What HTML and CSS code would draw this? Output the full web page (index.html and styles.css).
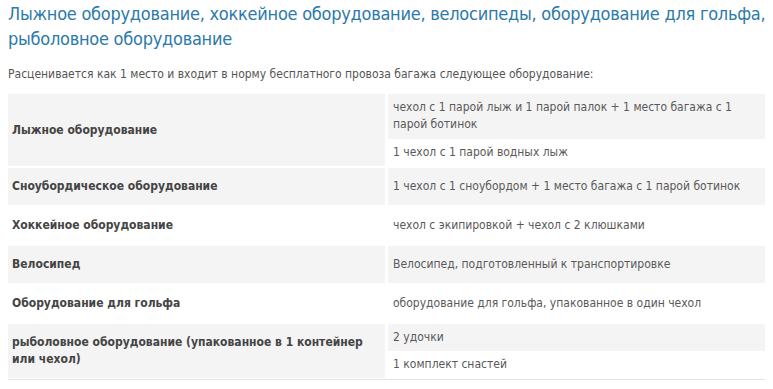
FILE: index.html
```html
<!DOCTYPE html>
<html lang="ru">
<head>
<meta charset="utf-8">
<link rel="stylesheet" href="styles.css">
</head>
<body>
<h2 class="title">Лыжное оборудование, хоккейное оборудование, велосипеды, оборудование для гольфа, рыболовное оборудование</h2>
<p class="intro">Расценивается как 1 место и входит в норму бесплатного провоза багажа следующее оборудование:</p>
<table class="equip">
  <tr class="gray">
    <td class="label">Лыжное оборудование</td>
    <td class="sub">
      <table class="inner">
        <tr class="gray"><td class="tall">чехол с 1 парой лыж и 1 парой палок + 1 место багажа с 1 парой ботинок</td></tr>
        <tr><td>1 чехол с 1 парой водных лыж</td></tr>
      </table>
    </td>
  </tr>
  <tr class="gray">
    <td class="label">Сноубордическое оборудование</td>
    <td class="sub"><table class="inner"><tr class="gray"><td class="single">1 чехол с 1 сноубордом + 1 место багажа с 1 парой ботинок</td></tr></table></td>
  </tr>
  <tr>
    <td class="label">Хоккейное оборудование</td>
    <td class="sub"><table class="inner"><tr><td class="single">чехол с экипировкой + чехол с 2 клюшками</td></tr></table></td>
  </tr>
  <tr class="gray">
    <td class="label">Велосипед</td>
    <td class="sub"><table class="inner"><tr class="gray"><td class="single">Велосипед, подготовленный к транспортировке</td></tr></table></td>
  </tr>
  <tr>
    <td class="label">Оборудование для гольфа</td>
    <td class="sub"><table class="inner"><tr><td class="single">оборудование для гольфа, упакованное в один чехол</td></tr></table></td>
  </tr>
  <tr class="gray">
    <td class="label">рыболовное оборудование (упакованное в 1 контейнер или чехол)</td>
    <td class="sub">
      <table class="inner">
        <tr class="gray"><td>2 удочки</td></tr>
        <tr><td>1 комплект снастей</td></tr>
      </table>
    </td>
  </tr>
</table>
</body>
</html>
```

FILE: styles.css
```css
body {
  margin: 0 8px 8px;
  background: #ffffff;
  font-family: "DejaVu Sans Condensed", "Liberation Sans", sans-serif;
  color: #555555;
}
.title {
  margin: 0 -10px 0 0;
  padding-top: 1px;
  font-size: 18px;
  line-height: 25px;
  letter-spacing: -0.25px;
  font-weight: normal;
  color: #2c79aa;
}
.intro {
  margin: 15px 0 11px;
  font-size: 12px;
  line-height: 17px;
}
.equip {
  width: 760px;
  border-collapse: separate;
  border-spacing: 0;
  border-bottom: 1px solid #e2e2e2;
  font-size: 12px;
  line-height: 17px;
}
.equip > tbody > tr > td {
  padding: 0;
  border-bottom: 2px solid #ffffff;
  vertical-align: middle;
}
.equip > tbody > tr:last-child > td {
  border-bottom: 1px solid #ffffff;
}
.equip > tbody > tr.gray > td.label {
  background: #f4f4f4;
}
.label {
  width: 369px;
  padding: 10px 4px !important;
  font-weight: bold;
  color: #444444;
  border-right: 3px solid #ffffff;
}
.sub {
  padding: 0;
}
.inner {
  width: 100%;
  border-collapse: collapse;
}
.inner td {
  padding: 5px 6px 5px 5px;
  color: #595959;
}
.inner td.tall {
  padding-bottom: 6px;
}
.inner td.single {
  padding-top: 10px;
  padding-bottom: 10px;
}
.inner tr.gray td {
  background: #f4f4f4;
}
```
